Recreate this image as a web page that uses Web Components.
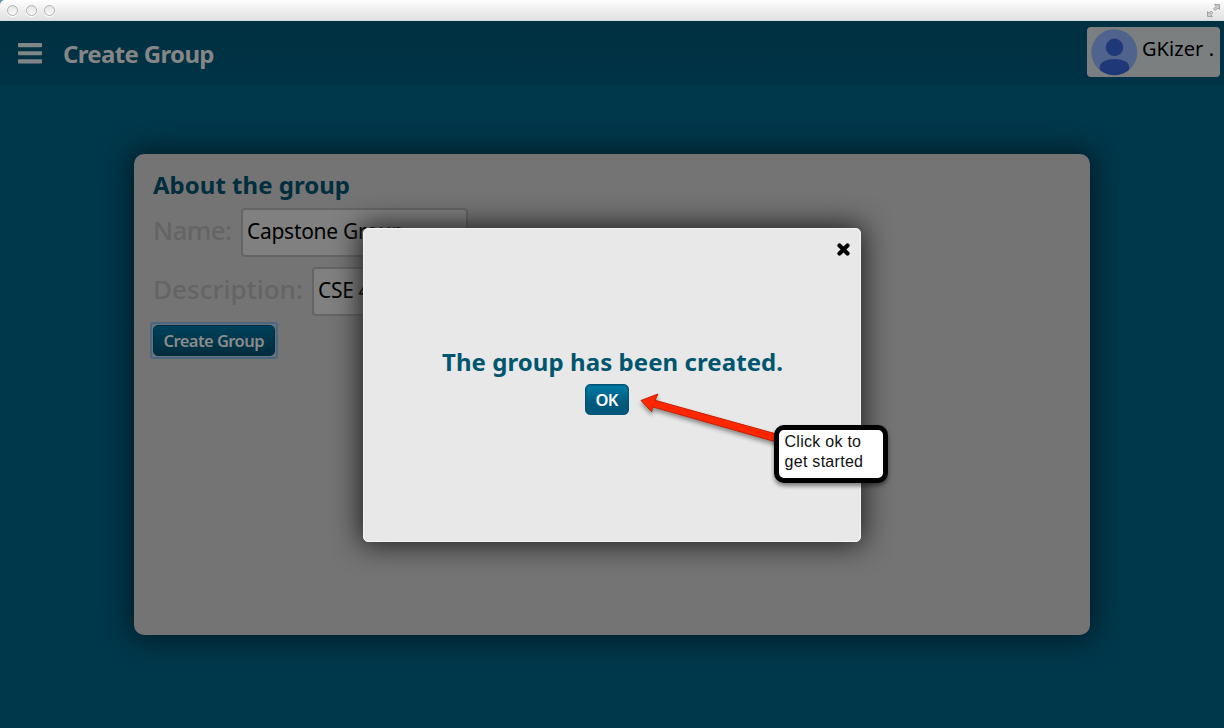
<!DOCTYPE html>
<html lang="en">
<head>
<meta charset="utf-8">
<title>Create Group</title>
<style>
html,body{margin:0;height:100%;overflow:hidden;background:#fff}
body{font-family:"Noto Sans","Open Sans",sans-serif}
</style>
</head>
<body>
<app-window></app-window>
<script>
const define = (name, html, setup) => customElements.define(name, class extends HTMLElement {
  connectedCallback() {
    if (this.shadowRoot) return;
    const t = document.createElement('template');
    t.innerHTML = html;
    this.attachShadow({mode: 'open'}).append(t.content.cloneNode(true));
    if (setup) setup(this);
  }
});

/* One line of text tracked out to a given width */
define('fit-text', `<style>:host{display:block;white-space:nowrap}span{display:inline-block}</style><span><slot></slot></span>`, el => {
  const span = el.shadowRoot.querySelector('span');
  const want = parseFloat(el.getAttribute('width'));
  const text = span.firstChild.assignedNodes({flatten: true}).map(n => n.textContent).join('').trim();
  const gaps = Math.max(1, text.length - 1);
  span.style.letterSpacing = ((want - span.getBoundingClientRect().width) / gaps) + 'px';
  el.style.width = want + 'px';
});

define('title-bar', `<style>
:host{display:flex;flex:none;box-sizing:border-box;height:21px;align-items:center;justify-content:space-between;padding:0 3px 0 7px;
background:linear-gradient(#fff,#f6f6f6 25%,#e2e2e2 92%,#c9dadd);border-radius:5px 0 0 0}
.dots{display:flex;gap:7.5px}
i{width:11px;height:11px;box-sizing:border-box;border-radius:50%;border:1.3px solid #b3b3b3;background:linear-gradient(#e6e6e6,#fafafa);box-shadow:0 1px 0 #fff}
</style><div class="dots"><i></i><i></i><i></i></div>
<svg width="15" height="15" viewBox="0 0 15 15" fill="#ccc" stroke="#a2a2a2" stroke-width="1"><path d="M8.500 1.500h5v5l-1.600-1.600-2.600 2.600-1.700-1.700 2.600-2.600z"/><path d="M6.500 13.500h-5v-5l1.600 1.600 2-2 1.700 1.700-2 2z"/></svg>`);

define('user-chip', `<style>
:host{display:flex;box-sizing:border-box;width:132.500px;height:50px;background:#7b7f80;border-radius:4px;padding:2px 4px;gap:4px;color:#000;font-size:20px;line-height:27px}
svg{flex:none}fit-text{margin-top:6px}
</style><svg width="47" height="47" viewBox="0 0 47 47"><defs><clipPath id="c"><circle cx="23.300" cy="23.300" r="23"/></clipPath></defs><circle cx="23.300" cy="23.300" r="23" fill="#50638c"/><g fill="#1f3878" clip-path="url(#c)"><circle cx="23.500" cy="18.300" r="8.700"/><path d="M8.800 47V38c0-5 7-8 14.700-8s14.700 3 14.700 8v9z"/></g></svg><fit-text width="72"><slot></slot></fit-text>`);

define('app-header', `<style>
:host{display:flex;flex:none;box-sizing:border-box;height:64px;background:linear-gradient(#003042,#003346);padding:6px 4.500px 0 17.500px;color:#868686}
svg{flex:none;margin-top:16px}
.t{font-size:24px;font-weight:700;line-height:32px;margin:11px auto 0 21px}
</style><svg width="24.500" height="21" fill="#818585"><rect width="24" height="4.200" rx=".8"/><rect y="8.200" width="24" height="4" rx=".8"/><rect y="16.300" width="24" height="4.200" rx=".8"/></svg>
<div class="t"><fit-text width="151.5"><slot></slot></fit-text></div><user-chip>GKizer .</user-chip>`);

define('text-field', `<style>
:host{display:flex;align-items:flex-start;height:49px}
.l{color:#646464;font-size:26px;font-weight:500;line-height:36px;margin-top:4px}
.b{box-sizing:border-box;height:49px;border:2px solid #656565;border-radius:4px;background:#808080;color:#000;font-size:21px;font-weight:450;line-height:43px;padding-left:4px;overflow:hidden;margin-left:9px}
</style><div class="l"><slot name="label"></slot></div><div class="b"><slot></slot></div>`, el => {
  el.shadowRoot.querySelector('.b').style.width = el.getAttribute('box') + 'px';
});

define('push-button', `<style>
:host{display:flex;box-sizing:border-box;align-items:center;justify-content:center;width:44px;height:31px;border:1px solid #005472;border-radius:5px;background:linear-gradient(#007ba6,#00587a 65%);color:#fff;font-size:16.500px;line-height:22px;font-weight:600;box-shadow:inset 0 1px 1px #00486880}
:host([dim]){width:122px;height:31px;background:linear-gradient(#00415a,#002d3e);border-color:#002c3d;color:#8b8b8b}
</style><slot></slot>`);

define('group-form', `<style>
:host{display:block;box-sizing:border-box;width:956px;height:481px;margin:69px auto 0 134px;border-radius:10px;background:#747474;box-shadow:0 0 28px 4px #001b26;padding:14px 19px}
h2{margin:0 0 6px;font-size:24px;line-height:34px;color:#002e3e}
text-field+text-field{margin-top:10px}
.focus{margin:6px 0 0 -3px;width:122px;padding:1px;border:2px solid #4d6781;border-radius:3px;background:#66747f}
</style><h2><fit-text width="197">About the group</fit-text></h2>
<text-field box="227"><fit-text slot="label" width="79">Name:</fit-text><fit-text width="157">Capstone Group</fit-text></text-field>
<text-field box="300"><fit-text slot="label" width="150">Description:</fit-text><fit-text width="76">CSE 480</fit-text></text-field>
<div class="focus"><push-button dim><fit-text width="101">Create Group</fit-text></push-button></div>`);

define('modal-dialog', `<style>
:host{position:absolute;left:363px;top:228px;width:498px;height:314px;box-sizing:border-box;border:1px solid #f4f4f4;border-radius:5px;background:#e8e8e8;box-shadow:0 0 28px 3px #222;display:flex;flex-direction:column;align-items:center}
.x{align-self:flex-end;margin:14px 10px 0 0;width:13px;height:13px}
.x svg{display:block}
h2{margin:89px 0 5px 1px;font-size:24px;line-height:34px;color:#00556f}
push-button{margin-right:10px}
</style><div class="x"><svg width="13" height="13" stroke="#000" stroke-width="4.200" stroke-linecap="round"><path d="M2.500 2.500l8 8m0-8l-8 8"/></svg></div><h2><slot name="message"></slot></h2><push-button><fit-text width="23">OK</fit-text></push-button>`);

define('callout-note', `<style>
:host{position:absolute;left:630px;top:385px}
svg{position:absolute;left:0;top:0;filter:drop-shadow(0 3px 2px #0006)}
div{position:absolute;left:144px;top:39.500px;box-sizing:border-box;width:114px;height:58px;border:5px solid #000;border-radius:10px;background:#fff;padding:2px 0 0 5.500px;color:#111;font:16px/20.500px "Liberation Sans",Arial,sans-serif;box-shadow:0 3px 4px #0007}
</style><svg width="160" height="75"><path d="M11 15.500L28 9l-3 6.300L150 50v8L22.500 21.800l-.800 5z" fill="#ff2600" stroke="#c91d00" stroke-width="1"/></svg><div><fit-text width="76.5">Click ok to</fit-text><fit-text width="78.5">get started</fit-text></div>`);

define('app-window', `<style>
:host{position:relative;display:flex;flex-direction:column;width:1224px;height:728px;background:#00384b;overflow:hidden}
.bar{background:#5d91a5;height:21px;flex:none}
</style><div class="bar"><title-bar></title-bar></div><app-header>Create Group</app-header><group-form></group-form>
<modal-dialog><fit-text slot="message" width="341">The group has been created.</fit-text></modal-dialog><callout-note></callout-note>`);
</script>
</body>
</html>
